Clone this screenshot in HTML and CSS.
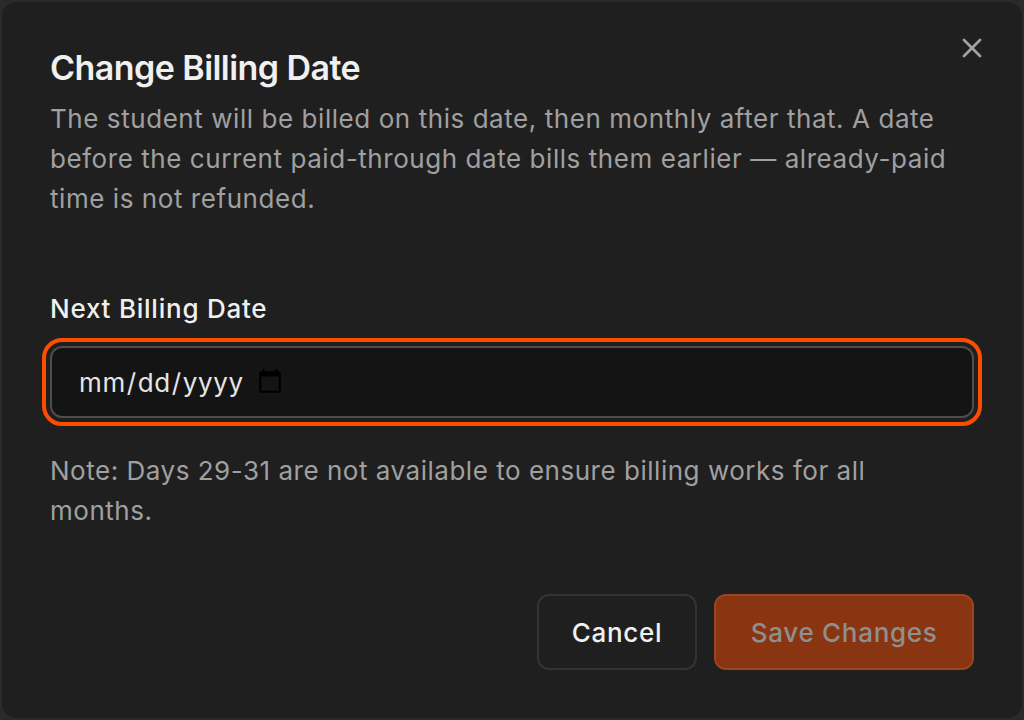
FILE: index.html
```html
<!DOCTYPE html>
<html lang="en">
<head>
<meta charset="utf-8">
<title>Change Billing Date</title>
<link rel="stylesheet" href="styles.css">
</head>
<body>
<div class="dialog" role="dialog">
  <button class="close" aria-label="Close">
    <svg width="32" height="32" viewBox="0 0 24 24" fill="none" stroke="currentColor" stroke-width="2" stroke-linecap="round" stroke-linejoin="round"><path d="M18 6 6 18"/><path d="m6 6 12 12"/></svg>
  </button>
  <header class="head">
    <h2 class="title">Change Billing Date</h2>
    <p class="desc">The student will be billed on this date, then monthly after that. A date before the current paid-through date bills them earlier — already-paid time is not refunded.</p>
  </header>
  <div class="field">
    <label class="label" for="d">Next Billing Date</label>
    <input class="input" id="d" type="date">
    <p class="note">Note: Days 29-31 are not available to ensure billing works for all months.</p>
  </div>
  <footer class="actions">
    <button class="btn cancel">Cancel</button>
    <button class="btn save">Save Changes</button>
  </footer>
</div>
</body>
</html>
```
FILE: styles.css
```css
* { box-sizing: border-box; }
html, body { margin: 0; height: 100%; background: #2a2a2a; }
body { font-family: Inter, "Liberation Sans", sans-serif; }
.dialog {
  position: relative;
  width: 1024px;
  height: 720px;
  padding: 48px;
  background: #1f1f1f;
  border: 2px solid #2a2a2a;
  border-radius: 16px;
  display: flex;
  flex-direction: column;
}
.close {
  position: absolute;
  top: 30px;
  right: 34px;
  width: 32px;
  height: 32px;
  padding: 0;
  border: 0;
  background: none;
  color: #a3a3a3;
}
.close svg { display: block; }
.head { display: flex; flex-direction: column; gap: 13px; }
.title { margin: 0; font-size: 34px; line-height: 36px; font-weight: 600; letter-spacing: -0.55px; color: #f0f0f0; }
.desc { margin: 0; font-size: 26px; line-height: 40px; letter-spacing: 0.56px; color: #a0a0a0; }
.field { margin-top: 72px; display: flex; flex-direction: column; }
.label { font-size: 26px; line-height: 36px; font-weight: 500; letter-spacing: 0.76px; color: #f0f0f0; }
.input {
  margin-top: 19px;
  width: 100%;
  height: 72px;
  padding: 0 26px;
  font: 400 26px Inter, sans-serif;
  letter-spacing: 0.6px;
  color: #e5e5e5;
  background: #141414;
  border: 2px solid #4d4d4d;
  border-radius: 12px;
  outline: 4px solid #ff4d00;
  outline-offset: 4px;
}
.input::-webkit-datetime-edit { flex: 0 0 auto; }
.input::-webkit-calendar-picker-indicator { margin-left: -26px; margin-right: auto; transform: scale(1.08); }
.note { margin: 33px 0 0; font-size: 26px; line-height: 40px; letter-spacing: 0.52px; color: #a0a0a0; }
.actions { margin-top: auto; display: flex; justify-content: flex-end; gap: 17px; }
.btn {
  height: 76px;
  font: 500 26px Inter, sans-serif;
  letter-spacing: 0.7px;
  border-radius: 12px;
}
.cancel { padding: 0 33px; background: transparent; border: 2px solid #333; color: #f0f0f0; }
.save { padding: 0 34.5px; background: #8a3512; border: 2px solid #9a4420; color: #8f8f8f; }
```
